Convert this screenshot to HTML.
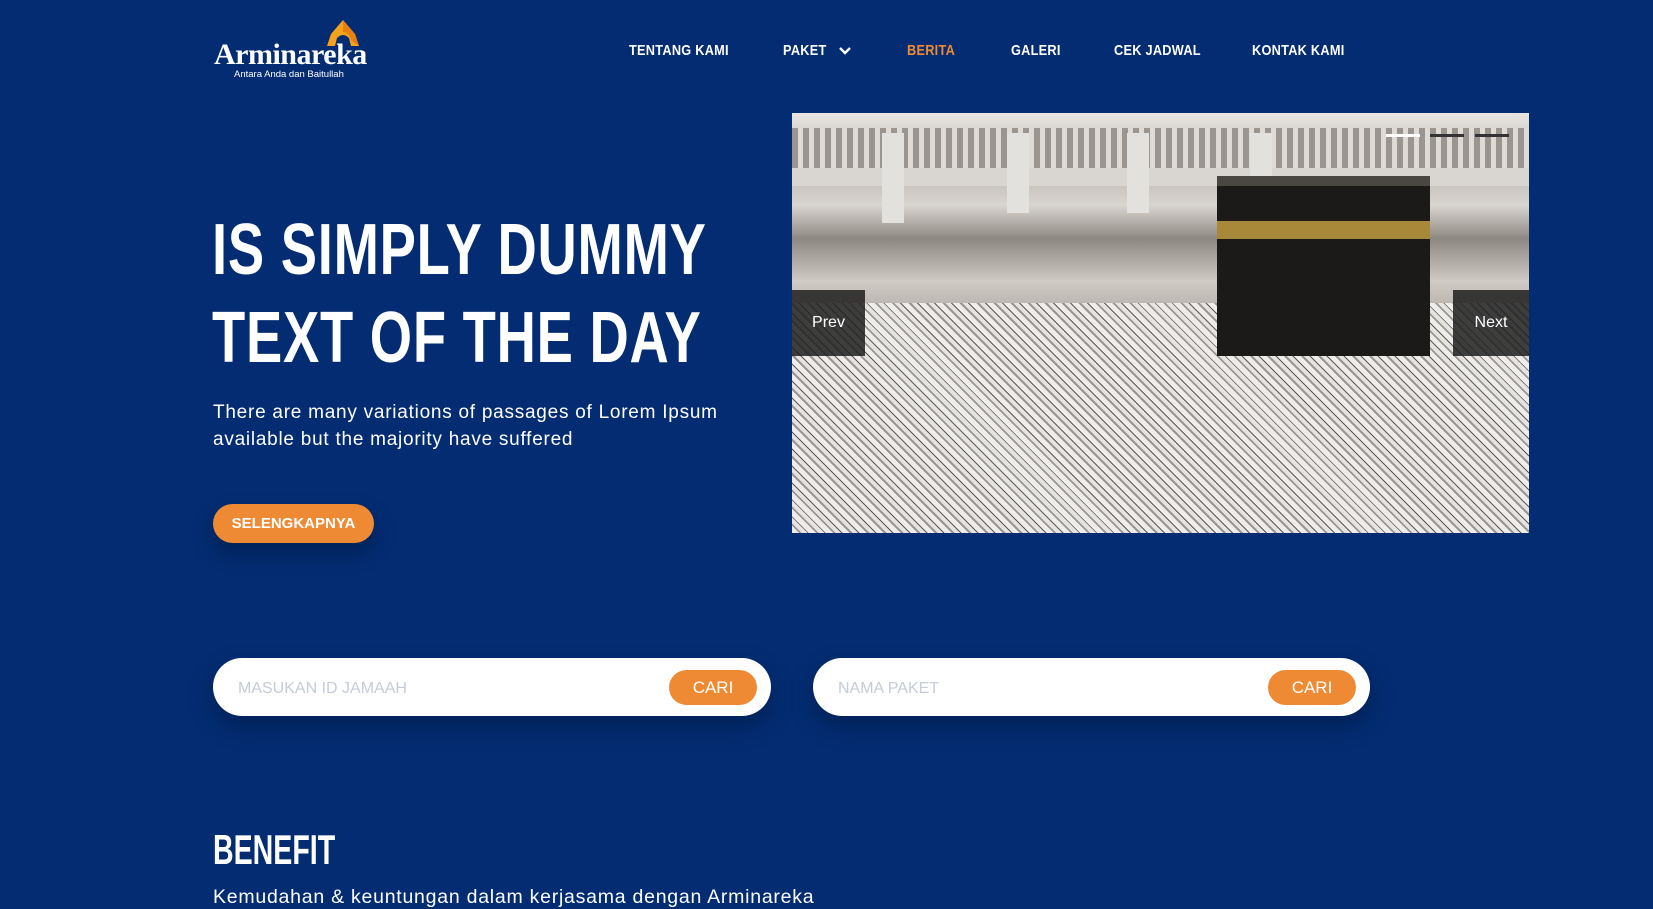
<!DOCTYPE html>
<html><head><meta charset="utf-8"><style>
*{margin:0;padding:0;box-sizing:border-box}
body{width:1653px;height:908px;overflow:hidden;background:#032c72;font-family:"Liberation Sans",sans-serif;color:#fff;position:relative}
.abs{position:absolute}
.cond{font-family:"Liberation Sans Narrow","Liberation Sans",sans-serif;font-weight:bold}
.nav a{position:absolute;top:42px;font-size:15px;color:#fff;text-decoration:none;letter-spacing:.3px;transform:scaleX(.85);transform-origin:left}
h1{position:absolute;left:212px;font-size:72px;line-height:1;letter-spacing:1px;transform:scaleX(.755);transform-origin:left;white-space:nowrap}
.search{position:absolute;top:658px;height:58px;background:#fff;border-radius:29px;box-shadow:0 10px 25px rgba(0,0,0,.25)}
.search span{position:absolute;left:25px;top:22px;color:#c4ccd8;font-size:16px}
.cari{position:absolute;right:14px;top:12px;width:88px;height:35px;border-radius:18px;background:#ef8a34;color:#fff;font-size:17px;text-align:center;line-height:35px}
</style></head><body>
<svg class="abs" style="left:323px;top:20px" width="40" height="28" viewBox="0 0 40 28"><path d="M20 0 L8 14 L4 26 L12 26 L14 18 Q20 12 26 18 L28 26 L36 26 L32 14 Z" fill="#f6a21d"/><path d="M20 0 L20 12 Q26 12 28 20 L36 26 L32 14Z" fill="#e87f12"/></svg>
<div class="abs" style="left:214px;top:38px;font-family:'Liberation Serif',serif;font-size:30px;font-weight:bold;letter-spacing:-.5px">Arminareka</div>
<div class="abs" style="left:234px;top:69px;font-size:9.5px">Antara Anda dan Baitullah</div>
<div class="nav cond">
<a style="left:629px">TENTANG KAMI</a>
<a style="left:783px">PAKET</a>
<a style="left:907px;color:#ef8a34">BERITA</a>
<a style="left:1011px">GALERI</a>
<a style="left:1114px">CEK JADWAL</a>
<a style="left:1252px">KONTAK KAMI</a>
</div>
<svg class="abs" style="left:838px;top:46px" width="14" height="10" viewBox="0 0 14 10"><path d="M2 2 L7 7 L12 2" stroke="#fff" stroke-width="2.4" fill="none"/></svg>
<h1 class="cond" style="top:214px">IS SIMPLY DUMMY</h1>
<h1 class="cond" style="top:302px">TEXT OF THE DAY</h1>
<div class="abs" style="left:213px;top:399px;font-size:19px;letter-spacing:.75px;line-height:27px;width:540px">There are many variations of passages of Lorem Ipsum available but the majority have suffered</div>
<div class="abs" style="left:213px;top:504px;width:161px;height:39px;border-radius:20px;background:#ef8a34;text-align:center;line-height:39px;font-size:15px;font-weight:bold;box-shadow:0 10px 22px rgba(0,0,0,.25)">SELENGKAPNYA</div>
<div class="abs" style="left:792px;top:113px;width:737px;height:420px;overflow:hidden;background:linear-gradient(180deg,#e9e6e2 0%,#b9b4ad 12%,#d8d4cf 22%,#8d8881 30%,#cfcac4 40%,#9c9891 55%,#b8b4ae 70%,#a8a49e 85%,#c9c5bf 100%)">
<div class="abs" style="left:0;top:15px;width:737px;height:40px;background:repeating-linear-gradient(90deg,#9a958f 0 6px,#dedbd7 6px 11px)"></div>
<div class="abs" style="left:0;top:55px;width:737px;height:18px;background:#d9d6d2"></div>
<div class="abs" style="left:90px;top:20px;width:22px;height:90px;background:#e3e1dd"></div>
<div class="abs" style="left:215px;top:20px;width:22px;height:80px;background:#e3e1dd"></div>
<div class="abs" style="left:335px;top:20px;width:22px;height:80px;background:#e3e1dd"></div>
<div class="abs" style="left:458px;top:20px;width:22px;height:80px;background:#e3e1dd"></div>
<div class="abs" style="left:0;top:190px;width:737px;height:230px;background:repeating-linear-gradient(45deg,#eeedeb 0 5px,#9a9591 5px 7px,#e6e4e1 7px 11px,#5b5754 11px 12px)"></div>
<div class="abs" style="left:425px;top:63px;width:213px;height:180px;background:#1b1a19"></div>
<div class="abs" style="left:425px;top:63px;width:213px;height:10px;background:#4a4743"></div>
<div class="abs" style="left:425px;top:108px;width:213px;height:18px;background:#a8893a"></div>
<div class="abs" style="left:0;top:177px;width:73px;height:66px;background:rgba(30,30,30,.85);color:#fff;font-size:16px;line-height:66px;text-align:center">Prev</div>
<div class="abs" style="left:661px;top:177px;width:76px;height:66px;background:rgba(30,30,30,.85);color:#fff;font-size:16px;line-height:66px;text-align:center">Next</div>
<div class="abs" style="left:594px;top:21px;width:34px;height:3px;background:#fff"></div>
<div class="abs" style="left:638px;top:21px;width:34px;height:3px;background:#333"></div>
<div class="abs" style="left:683px;top:21px;width:34px;height:3px;background:#333"></div>
</div>
<div class="search" style="left:213px;width:558px"><span>MASUKAN ID JAMAAH</span><div class="cari">CARI</div></div>
<div class="search" style="left:813px;width:557px"><span>NAMA PAKET</span><div class="cari">CARI</div></div>
<div class="abs cond" style="left:213px;top:826px;font-size:42px;transform:scaleX(.68);transform-origin:left">BENEFIT</div>
<div class="abs" style="left:213px;top:886px;font-size:19.5px;letter-spacing:.75px">Kemudahan &amp; keuntungan dalam kerjasama dengan Arminareka</div>
</body></html>
